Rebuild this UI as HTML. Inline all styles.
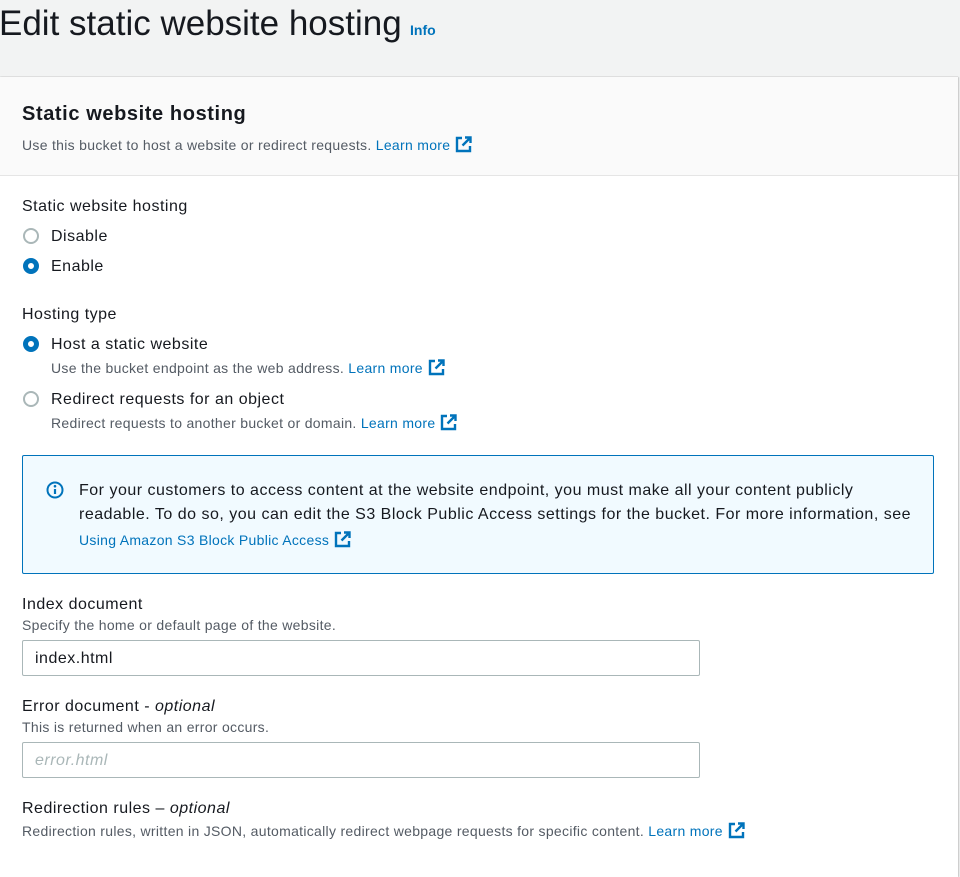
<!DOCTYPE html>
<html><head><meta charset="utf-8"><style>
*{box-sizing:border-box;margin:0;padding:0}
body{width:960px;height:847px;overflow:hidden;background:#f2f3f3;font-family:"Liberation Sans",sans-serif;color:#16191f;position:relative}
.a{position:absolute;white-space:nowrap;line-height:1}
.card{position:absolute;left:0;top:77px;width:958px;height:800px;background:#fff;box-shadow:1px 0 1px #c6c6c6, 0 -1px 0 #e3e5e5}
.hd{position:absolute;left:0;top:0;width:100%;height:99px;background:#fafafa;border-bottom:1px solid #e5e5e5}
.lnk{color:#0073bb}
.d{font-size:14px;color:#545b64;letter-spacing:0.3px}
.l{font-size:16px;letter-spacing:0.5px}
.r{position:absolute;width:16px;height:16px;border-radius:50%;border:2px solid #aab7b8;background:#fff}
.r.on{border:5px solid #0073bb}
.inp{position:absolute;left:22px;width:678px;height:36px;border:1px solid #aab7b8;border-radius:2px;background:#fff}
.ext{display:inline-block;vertical-align:-3px;margin-left:5px}
</style></head><body>
<svg width="0" height="0" style="position:absolute"><defs><g id="e"><path d="M7 2H2v13h13v-5" fill="none" stroke="#0073bb" stroke-width="2.4"/><path d="M10 1.5h5.5v5.5M15.5 1.5L7.5 9.5" fill="none" stroke="#0073bb" stroke-width="2.4"/></g></defs></svg>
<div class="a" style="left:-1px;top:6px;font-size:35px">Edit static website hosting</div>
<div class="a lnk" style="left:410px;top:23px;font-size:14px;font-weight:bold">Info</div>
<div class="card">
<div class="hd"></div>
<div class="a" style="left:22px;top:27px;font-size:20px;font-weight:bold;letter-spacing:0.6px">Static website hosting</div>
<div class="a d" style="left:22px;top:59px">Use this bucket to host a website or redirect requests. <span class="lnk">Learn more</span><svg class="ext" width="17" height="17" viewBox="0 0 17 17"><use href="#e"/></svg></div>

<div class="a l" style="left:22px;top:122px">Static website hosting</div>
<div class="r" style="left:23px;top:151px"></div><div class="a l" style="left:51px;top:152px">Disable</div>
<div class="r on" style="left:23px;top:181px"></div><div class="a l" style="left:51px;top:182px">Enable</div>

<div class="a l" style="left:22px;top:230px">Hosting type</div>
<div class="r on" style="left:23px;top:259px"></div><div class="a l" style="left:51px;top:260px">Host a static website</div>
<div class="a d" style="left:51px;top:282px">Use the bucket endpoint as the web address. <span class="lnk">Learn more</span><svg class="ext" width="17" height="17" viewBox="0 0 17 17"><use href="#e"/></svg></div>
<div class="r" style="left:23px;top:314px"></div><div class="a l" style="left:51px;top:315px">Redirect requests for an object</div>
<div class="a d" style="left:51px;top:337px">Redirect requests to another bucket or domain. <span class="lnk">Learn more</span><svg class="ext" width="17" height="17" viewBox="0 0 17 17"><use href="#e"/></svg></div>

<div style="position:absolute;left:22px;top:378px;width:912px;height:119px;border:1px solid #0073bb;border-radius:2px;background:#f1faff"></div>
<svg style="position:absolute;left:46px;top:404px" width="18" height="18" viewBox="0 0 18 18"><circle cx="9" cy="9" r="7.5" fill="none" stroke="#0073bb" stroke-width="2"/><path d="M9 8v5" stroke="#0073bb" stroke-width="2.2"/><circle cx="9" cy="5.2" r="1.3" fill="#0073bb"/></svg>
<div class="a l" style="left:79px;top:406px">For your customers to access content at the website endpoint, you must make all your content publicly</div>
<div class="a l" style="left:79px;top:430px">readable. To do so, you can edit the S3 Block Public Access settings for the bucket. For more information, see</div>
<div class="a d lnk" style="left:79px;top:454px;color:#0073bb">Using Amazon S3 Block Public Access<svg class="ext" width="17" height="17" viewBox="0 0 17 17"><use href="#e"/></svg></div>

<div class="a l" style="left:22px;top:520px">Index document</div>
<div class="a d" style="left:22px;top:541px">Specify the home or default page of the website.</div>
<div class="inp" style="top:563px"></div><div class="a l" style="left:35px;top:574px">index.html</div>

<div class="a l" style="left:22px;top:622px">Error document - <i>optional</i></div>
<div class="a d" style="left:22px;top:643px">This is returned when an error occurs.</div>
<div class="inp" style="top:665px"></div><div class="a l" style="left:35px;top:676px;color:#aab7b8;font-style:italic">error.html</div>

<div class="a l" style="left:22px;top:724px">Redirection rules – <i>optional</i></div>
<div class="a d" style="left:22px;top:745px">Redirection rules, written in JSON, automatically redirect webpage requests for specific content. <span class="lnk">Learn more</span><svg class="ext" width="17" height="17" viewBox="0 0 17 17"><use href="#e"/></svg></div>
</div>
</body></html>
